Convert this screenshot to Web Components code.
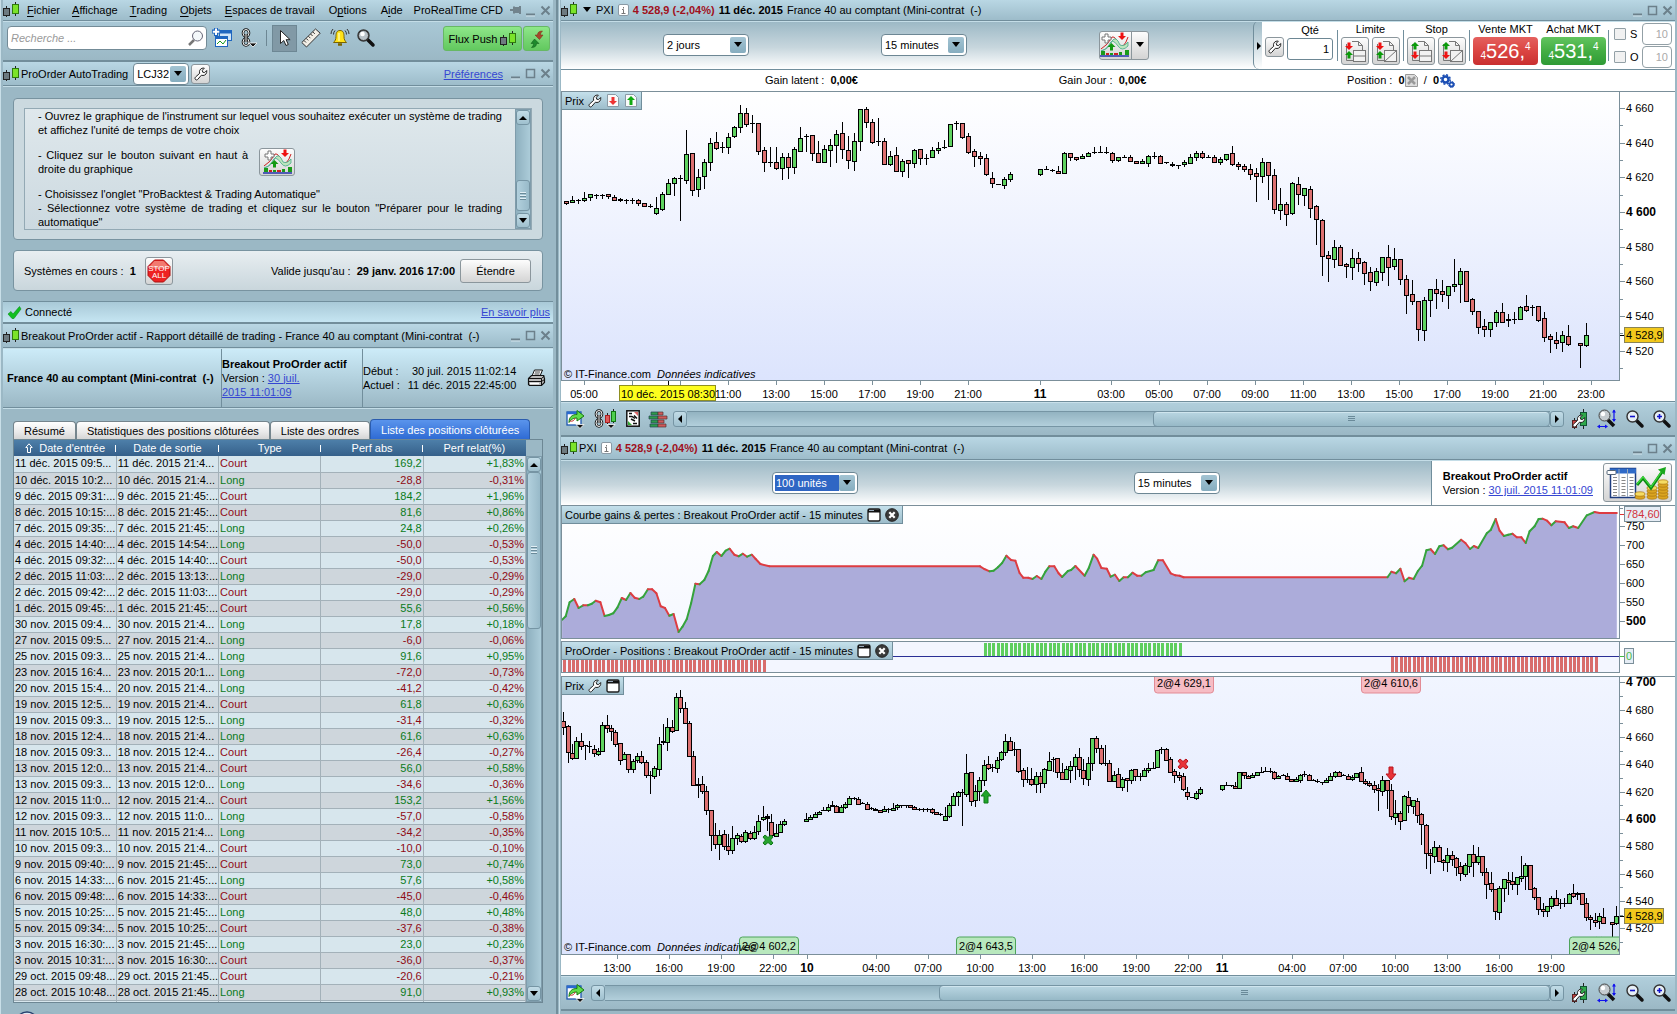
<!DOCTYPE html>
<html lang="fr">
<head>
<meta charset="utf-8">
<title>ProRealTime CFD</title>
<style>
  html, body { margin: 0; height: 100%; }
  body { font: 11px/14px "Liberation Sans", Arial, sans-serif; color: #000; background: #9bb8c5; overflow: hidden; }
</style>
</head>
<body>
<rt-desktop>
  <div slot="left">
    <rt-menu-bar></rt-menu-bar>
    <rt-tools></rt-tools>
    <rt-autotrading></rt-autotrading>
  </div>
  <rt-report slot="left"></rt-report>
  <rt-price-window slot="right"></rt-price-window>
  <rt-backtest-window slot="right"></rt-backtest-window>
</rt-desktop>

<script>
const BASE = `
  *, *::before, *::after { box-sizing: border-box; }
  :host { display: block; box-sizing: border-box; }
  button { font: inherit; color: inherit; margin: 0; padding: 0; border: 0; background: none; display: inline-flex; align-items: center; justify-content: center; }
  input { font: inherit; color: inherit; margin: 0; }
  a { color: #3546d2; }
  .raised { border: 1px solid #8b969c; border-radius: 3px; background: linear-gradient(#fdfdfd, #e8e8e8 50%, #d4d4d4); }
  rt-icon { flex: none; }
`;
function define(name, css, html, after) {
  customElements.define(name, class extends HTMLElement {
    connectedCallback() {
      if (this.shadowRoot) return;
      const root = this.attachShadow({ mode: 'open' });
      root.innerHTML = '<style>' + BASE + css + '</style>' + (typeof html === 'function' ? html(this) : html);
      if (after) after(root, this);
    }
  });
}

/* ---------- icons: [width, height, markup] ---------- */
const LENS = (x, mark) => `<path d="M${x + 10} 10l6 6" stroke="#111" stroke-width="3.500" stroke-linecap="round"/><circle cx="${x + 6.500}" cy="6.500" r="5.500" fill="#e6eef4" stroke="#333" stroke-width="1.400"/>${mark}`;
const WRENCH = (fill) => `<path d="M1.500 12.500c-.8-.9-.6-1.800.2-2.600l4-3.600c-.7-2.200.3-4.300 2.300-5 .9-.3 1.700-.3 2.300-.1L8.300 3.300l.4 1.900 1.900.4 2.100-2.100c.5 2.600-1.100 4.900-3.700 5-.6 0-1.100-.1-1.600-.3l-3.500 4c-.8.900-1.700 1-2.400.3z" fill="${fill}" stroke="#222" stroke-width="1"/>`;
const UP = (x, y, c) => `<path d="M${x} ${y}l4 4h-2.500v3.500h-3V${y + 4}h-2.500z" fill="${c}"/>`;
const DOWN = (x, y, c) => `<path d="M${x} ${y}l4-4h-2.500v-3.500h-3v3.500h-2.500z" fill="${c}"/>`;
const DOC = `<path d="M4.500 6V22.500h8M10 3.500h6.500l4 4v6M16.500 3.500v4h4" fill="none" stroke="#777"/>`;
const ORDER = (arrows, line) => `${DOC}<rect x="11.500" y="12.500" width="12" height="11" fill="#f2f2f2" stroke="#777"/>${line ? '<path d="M11.500 23.500l12-11" stroke="#777" fill="none"/>' : '<path d="M11.500 18h12" stroke="#777" fill="none"/>'}${arrows}`;
const TINYDOC = (m) => `<path d="M1.500.5h8l3 3v9h-11z" fill="#fafafa" stroke="#8a9aa5"/>${m}`;
const BACKTEST = `<path d="M1 17Q8 13 12 5Q16 4 19 14Q24 17 28 5" fill="none" stroke="#c22" stroke-width="1"/><path d="M1 19Q9 17 12 9Q16 3 20 13Q24 15 28 10V14Q22 20 18 14Q12 5 9 13Q6 18 1 19" fill="#bde6bd" stroke="#4a8" stroke-width=".8"/><path d="M5 2h3v3h3v3h-3v3h-3v-3h-3v-3h3z" fill="#fff" stroke="#777"/>${UP(11.500, 11, '#129a12')}${DOWN(22, 8, '#e11')}<path d="M1 19h4v4h-4zM10 21h3v2h-3zM19 20h3v3h-3zM25 18h4v5h-4z" fill="#1a9a1a"/><path d="M6 21h3v2h-3zM14 21h4v2h-4z" fill="#c22"/><path d="M0 24h29" stroke="#2233aa" stroke-width="1.500"/>`;
const CHAIN = `<ellipse cx="5" cy="5" rx="3" ry="3.500" fill="none" stroke="#111" stroke-width="2.600"/><ellipse cx="5" cy="14" rx="3" ry="3.500" fill="none" stroke="#111" stroke-width="2.600"/><ellipse cx="5" cy="5" rx="3" ry="3.500" fill="none" stroke="#fff" stroke-width="1"/><ellipse cx="5" cy="14" rx="3" ry="3.500" fill="none" stroke="#fff" stroke-width="1"/><path d="M5 6v8" stroke="#111" stroke-width="3"/><path d="M5 6v8" stroke="#fff"/>`;
const COIN = (x, y, n) => { let s = ''; for (let i = 0; i < n; i++) s += `<ellipse cx="${x}" cy="${y - i * 3}" rx="5" ry="2.200" fill="${i === n - 1 ? '#f6dc62' : '#dba520'}" stroke="#a87410" stroke-width=".7"/>`; return s; };
const ICONS = {
  logo: [16, 18, '<path d="M3.500 5v11M12.500 1v14" stroke="#222"/><rect x=".5" y="7.500" width="6" height="7" fill="#6d7a80" stroke="#222"/><rect x="9.500" y="3.500" width="6" height="9" fill="#7be32a" stroke="#2f7a10"/>'],
  search: [16, 16, '<path d="M6 10l-5 5" stroke="#777" stroke-width="2.500"/><circle cx="9.500" cy="6" r="5" fill="#f4f8fa" stroke="#667"/>'],
  windows: [20, 20, '<rect x="7.500" y="2.500" width="12" height="10" fill="#cfe4f8" stroke="#1e66c0"/><path d="M7 4h13" stroke="#1e66c0" stroke-width="3"/><rect x="3.500" y="8.500" width="12" height="10" fill="#fff" stroke="#1e66c0"/><path d="M3 9.500h13" stroke="#1e66c0" stroke-width="3"/><path d="M5 16l3-3 3 3 3-4" fill="none" stroke="#1a9a1a"/><path d="M4 0v8M0 3.500h8" stroke="#1e66c0" stroke-width="4"/><path d="M4 .5v6.500M.8 3.700h6.500" stroke="#fff" stroke-width="2"/>'],
  chain: [16, 20, CHAIN + '<path d="M8 15h8l-4 4z" fill="#111" stroke="#fff" stroke-width=".8"/>'],
  cursor: [12, 18, '<path d="M1.500 1.500v13l3.300-3 2.200 5 2.300-1-2.200-4.800h4z" fill="#fff" stroke="#222"/>'],
  ruler: [20, 20, '<path d="M.8 14.500L14.500 1l4.700 4.200L5.500 19z" fill="#f3efe6" stroke="#333"/><path d="M3 12.500l2 2M5.200 10.400l2 2M7.400 8.200l2 2M9.600 6l2 2M11.800 3.900l2 2" stroke="#333"/>'],
  bell: [20, 20, '<path d="M10 2.500c3.500 0 4 3 4 6s1 4.500 2.500 6h-13c1.500-1.500 2.500-3 2.500-6s.5-6 4-6z" fill="#ffe21a" stroke="#7a6300"/><path d="M9 5v8" stroke="#fff8a0" stroke-width="1.500"/><path d="M8 16.500h4" stroke="#7a6300" stroke-width="2.500"/><path d="M1 6Q1 3 3 1M3.500 6.500Q3.500 4 5 2.500M19 6Q19 3 17 1M16.500 6.500Q16.500 4 15 2.500" fill="none" stroke="#333"/>'],
  magnifier: [18, 18, LENS(0, '<circle cx="6.500" cy="6.500" r="5" fill="#b9c2c8" stroke="#333"/><circle cx="5.500" cy="5" r="2.300" fill="#fff"/>')],
  wrench: [14, 14, WRENCH('#fff')],
  swap: [14, 18, '<path d="M12.500 1C9 1 7.500 2.500 7.500 5H5l4.500 4.500L13 5h-2.500c0-1.500.5-2.500 2-4z" fill="#a5482c" stroke="#7a2a12" stroke-width=".5"/><path d="M1.500 17.500C5 17.500 6.500 16 6.500 13.500H9L4.500 9 1 13.500h2.500c0 1.500-.5 2.500-2 4z" fill="#1d8a2c" stroke="#0c5517" stroke-width=".5"/>'],
  pin: [12, 10, '<path d="M0 5h4M4 1.500v7M5 3h4v4h-4zM10 1v8" stroke="#71838d" stroke-width="2" fill="#71838d"/>'],
  min: [11, 11, '<path d="M1 9.500h9" stroke="#6c808b" stroke-width="2"/><path d="M1 11h9" stroke="#d2e4ec" stroke-width="1"/>'],
  max: [11, 11, '<rect x="1.500" y="1.500" width="8" height="8" fill="none" stroke="#6c808b" stroke-width="1.500"/>'],
  close: [11, 11, '<path d="M1.500 1.500l8 8M9.500 1.500l-8 8" stroke="#6c808b" stroke-width="2"/>'],
  info: [11, 13, '<rect x=".5" y=".5" width="10" height="11" rx="1.500" fill="#fff" stroke="#8a9aa5"/><path d="M5.500 3v1.500M4 5.500h1.500v4M3.500 9.500h4" stroke="#777" fill="none"/>'],
  backtest: [29, 26, BACKTEST],
  check: [13, 13, '<path d="M0 8l3-2.500 2 2.500 6.500-7.500L13 3 6 12.500H4z" fill="#10c020" stroke="#0a8a18" stroke-width=".6"/>'],
  stopall: [24, 24, '<path d="M7.500 1h9L23 7.500v9L16.500 23h-9L1 16.500v-9z" fill="#e22" stroke="#a11"/><path d="M7.500 2h9L22 8q-10 4-20 0z" fill="#f27a70"/><text x="12" y="11.500" text-anchor="middle" font-size="8" fill="#fff">STOP</text><text x="12" y="19" text-anchor="middle" font-size="8" fill="#fff">ALL</text>'],
  printer: [18, 18, '<path d="M5 7L7.500 1h8L13 7z" fill="#fff" stroke="#111"/><path d="M8 3h5M7.500 5h5" stroke="#111" stroke-width=".8"/><path d="M1.500 9.500l3-3h12l1 3v4l-3 3h-12l-1-1z" fill="#bbb" stroke="#111" stroke-width="1.200"/><path d="M1.500 9.500h13v7M14.500 9.500l3-2.500M1.500 12.500h13l3-2" stroke="#111" fill="none"/><path d="M3 14.500h9" stroke="#fff" stroke-width="1.500"/>'],
  uparrow: [8, 10, '<path d="M4 .8l3.200 3.700H5.500v5h-3v-5H.8z" fill="none" stroke="#fff"/>'],
  buylimit: [26, 26, ORDER(DOWN(7, 12, '#e11') + UP(7, 13, '#0a9a0a'))],
  selllimit: [26, 26, ORDER(DOWN(7, 12, '#e11') + UP(7, 13, '#0a9a0a'), 1)],
  buystop: [26, 26, ORDER(UP(7, 4, '#0a9a0a') + DOWN(7, 21, '#e11'))],
  sellstop: [26, 26, ORDER(UP(7, 4, '#0a9a0a') + DOWN(7, 21, '#e11'), 1)],
  docx: [13, 13, '<path d="M.5.5h9l3 3v9h-12z" fill="#ddd" stroke="#999"/><path d="M3 3l7 7M10 3l-7 7" stroke="#999" stroke-width="2.500"/>'],
  gears: [16, 14, '<circle cx="6.500" cy="5.500" r="3" fill="none" stroke="#1c4fb4" stroke-width="2.500"/><circle cx="6.500" cy="5.500" r="4.700" fill="none" stroke="#1c4fb4" stroke-width="1.500" stroke-dasharray="2 1.700"/><circle cx="12.500" cy="10.500" r="2" fill="none" stroke="#1c4fb4" stroke-width="1.800"/><circle cx="12.500" cy="10.500" r="3" fill="none" stroke="#1c4fb4" stroke-dasharray="1.200 1.200"/>'],
  docdown: [14, 13, TINYDOC('<path d="M7 11L3 7h2.500V3h3v4H11z" fill="#e33"/>')],
  docup: [14, 13, TINYDOC('<path d="M7 2l4 4H8.500v5h-3V6H3z" fill="#1a1"/>')],
  detach: [14, 14, '<rect x="1" y="1" width="12" height="12" rx="1.500" fill="#fff" stroke="#222" stroke-width="1.400"/><path d="M1 3h12" stroke="#111" stroke-width="3"/><path d="M2 2.500h5" stroke="#9ab" />'],
  closeround: [14, 14, '<circle cx="7" cy="7" r="6.300" fill="#3a3a3a" stroke="#222"/><path d="M4.300 4.300l5.400 5.400M9.700 4.300L4.300 9.700" stroke="#fff" stroke-width="2.200"/>'],
  export: [19, 19, '<rect x="1" y="3" width="14" height="13" fill="#fff" stroke="#1e56b0" stroke-width="1.300"/><path d="M1 4h14" stroke="#2a6ad0" stroke-width="2.500"/><path d="M3 13.500C3 8 6 5.500 11 5.500V1.500L18 7 11 12V9C8 9 5 10 3 13.500z" fill="#5fdc4a" stroke="#1a7a10"/><path d="M4 12Q8 13 9 9" fill="none" stroke="#c33"/><path d="M10 15.500h8l-4 4z" fill="#111" stroke="#fff" stroke-width=".8"/>'],
  chaincandles: [23, 20, CHAIN + '<path d="M13.500 4v11M19.500 0v14" stroke="#222"/><rect x="11.500" y="6.500" width="4" height="7" fill="#e05a5a" stroke="#a22"/><rect x="17.500" y="2.500" width="4" height="10" fill="#4fcf4f" stroke="#171"/><path d="M13 15.500h8l-4 4z" fill="#111" stroke="#fff" stroke-width=".8"/>'],
  orders: [14, 17, '<rect x=".8" y=".8" width="12.400" height="15.400" fill="#fff" stroke="#111" stroke-width="1.500"/><path d="M8 2h4v4z" fill="#d66"/><path d="M2 15v-4l4 4z" fill="#3a3"/><path d="M3 3.500h3M3 6.500h3l3 2M5 9l4 2M7 13.500h4M8 5.500l3 3" stroke="#111" stroke-width="1.500" fill="none"/>'],
  book: [18, 18, '<path d="M9 2H2v3h7zM9 6H0v3h9zM9 10H2v3h7zM9 14H1v3h8z" fill="#2f9a4c" stroke="#245" stroke-width=".7"/><path d="M9 2h5v3H9zM9 6h9v3H9zM9 10h6v3H9zM9 14h8v3H9z" fill="#cf5a5a" stroke="#533" stroke-width=".7"/>'],
  wrenchcandles: [16, 20, '<path d="M11.500 0v20M2.500 9v11" stroke="#222"/><rect x="8.500" y="3.500" width="6" height="13" fill="#2fa84a" stroke="#153"/><rect x="0.500" y="11.500" width="4" height="7" fill="#c44" stroke="#522"/><g transform="translate(0 5)">' + WRENCH('#fff') + '</g>'],
  zoomfit: [20, 20, '<path d="M10 10l7 7" stroke="#111" stroke-width="3.500"/><circle cx="7.500" cy="6.500" r="5.500" fill="#c4cbcf" stroke="#444"/><circle cx="6" cy="5" r="2.200" fill="#fff"/><path d="M17 1v11M1 17.500h9" stroke="#11e" stroke-width="1.200"/><path d="M15 3.500L17 .5l2 3zM15 10l2 3 2-3zM3 15.500l-3 2 3 2zM8 15.500l3 2-3 2z" fill="#11e"/>'],
  zoomout: [18, 18, LENS(0, '<path d="M4 6.500h5" stroke="#11c" stroke-width="1.600"/>')],
  zoomin: [18, 18, LENS(0, '<path d="M4 6.500h5M6.500 4v5" stroke="#11c" stroke-width="1.600"/>')],
  report: [64, 36, '<rect x="4.500" y="3.500" width="25" height="29" fill="#fff" stroke="#1c3c80" stroke-width="1.500"/><path d="M4 6h26" stroke="#2e6ac8" stroke-width="5"/><path d="M13 4v28M21.500 4v28" stroke="#9ab" stroke-width="1"/><path d="M9 12v19M17.500 12v19M25.500 12v19" stroke="#888" stroke-width="4" stroke-dasharray="1 2"/><rect x="1" y="5.500" width="9" height="4" rx="1" fill="#fff" stroke="#567"/>' + COIN(34, 32, 2) + COIN(46, 32, 4) + COIN(57, 32, 6) + '<path d="M31 20l6-7 8 10L56 7" fill="none" stroke="#0c8a14" stroke-width="3"/><path d="M31 19l6-7 8 10L56 6" fill="none" stroke="#3ddc3a" stroke-width="1.200"/><path d="M52 4.500L60 2l-1.500 8z" fill="#18a81c"/>'],
  tri: [10, 6, '<path d="M1 0h8L5 5z" fill="#000"/>'],
  left: [6, 10, '<path d="M5 1v8L1 5z" fill="#000"/>'],
  right: [6, 10, '<path d="M1 1v8l4-4z" fill="#000"/>'],
  triup: [10, 6, '<path d="M1 5h8L5 1z" fill="#000"/>']
};
define('rt-icon', `:host { display: inline-flex; } svg { display: block; overflow: visible; }`,
  el => { const [w, h, m] = ICONS[el.getAttribute('name')]; return `<svg width="${w}" height="${h}" viewBox="0 0 ${w} ${h}" fill="none" aria-hidden="true">${m}</svg>`; });

define('rt-select', `
  .box { display: flex; align-items: center; height: 22px; width: 100%; padding: 2px; border: 1px solid #6d8794; border-radius: 4px; background: #fff; }
  select { flex: 1; min-width: 0; height: 16px; appearance: none; border: 0; outline: 0; background: transparent; font: inherit; color: #000; padding: 0 0 0 1px; margin: 0; border-radius: 0; }
  :host([active]) select { background: #2f66c4; color: #fff; }
  .arrow { display: flex; align-items: center; justify-content: center; flex: none; width: 16px; height: 16px; background: linear-gradient(#a3c4d3, #86adbf); border-radius: 2px; }
`, el => `<div class="box"><select aria-label="${el.getAttribute('label')}"><option>${el.getAttribute('value')}</option></select><span class="arrow"><rt-icon name="tri"></rt-icon></span></div>`);

define('rt-controls', `:host { display: flex; gap: 4px; flex: none; } button { width: 11px; height: 11px; }`,
  el => (el.hasAttribute('pin') ? '<button aria-label="Épingler"><rt-icon name="pin"></rt-icon></button>' : '') +
    '<button aria-label="Réduire"><rt-icon name="min"></rt-icon></button>' +
    (el.hasAttribute('pin') ? '' : '<button aria-label="Agrandir"><rt-icon name="max"></rt-icon></button>') +
    '<button aria-label="Fermer"><rt-icon name="close"></rt-icon></button>');

define('rt-titlebar', `
  :host { display: flex; align-items: center; height: 23px; padding-right: 2px; white-space: pre; background: linear-gradient(#b9d7e4, #9dbcca); border-bottom: 1px solid #718e9c; box-shadow: 0 1px #c4dde7; position: relative; }
  .main { display: flex; align-items: center; gap: 2px; flex: 1; min-width: 0; }
`, el => `<div class="main"><rt-icon name="logo"></rt-icon><slot></slot></div><slot name="end"></slot><rt-controls ${el.hasAttribute('pin') ? 'pin' : ''}></rt-controls>`);

define('rt-desktop', `
  :host { display: flex; height: 100vh; }
  .left { flex: none; width: 558px; padding: 0 3px; display: flex; flex-direction: column; border-right: 2px solid #728e9b; border-left: 1px solid #c9dfe8; padding-left: 2px; }
  .right { flex: 1; min-width: 0; margin-left: 1px; padding: 0 2px 0 1px; border-left: 1px solid #c9dfe8; }
`, `<div class="left"><slot name="left"></slot></div><div class="right"><slot name="right"></slot></div>`);

define('rt-menu-bar', `
  rt-titlebar { height: 21px; }
  nav { display: flex; gap: 12px; padding-left: 6px; flex: 1; }
  nav button:nth-child(n+4) { margin-left: 1px; }
  nav button:nth-child(n+6) { margin-left: 2px; }
  span { margin-right: 7px; }
  u { text-underline-offset: 2px; }
`, `<rt-titlebar pin><nav>
  <button><u>F</u>ichier</button><button><u>A</u>ffichage</button><button><u>T</u>rading</button><button><u>O</u>bjets</button><button><u>E</u>spaces de travail</button><button>O<u>p</u>tions</button><button>A<u>i</u>de</button>
</nav><span slot="end">ProRealTime CFD</span></rt-titlebar>`);

define('rt-tools', `
  :host { display: flex; align-items: flex-start; height: 41px; padding: 4px 3px 0 4px; border-bottom: 2px solid #728e9b; background: linear-gradient(#a9c8d6, #9bb8c5); }
  .search { display: flex; align-items: center; width: 200px; height: 24px; margin-top: 1px; padding: 0 2px; border: 1px solid #738b97; border-radius: 4px; background: #fff; }
  .search input { flex: 1; min-width: 0; border: 0; outline: 0; padding: 0 1px; font-style: italic; background: none; }
  .search input::placeholder { color: #9a9a9a; opacity: 1; }
  .set { display: flex; align-items: center; height: 26px; margin-left: 5px; gap: 9px; flex: 1; }
  .set button:nth-last-child(1) { margin-left: -2px; }
  .set i { width: 1px; height: 16px; background: #6d8794; }
  .set .on { width: 25px; height: 27px; background: #8199a6; border: 1px solid #6d8794; margin-left: -4px; margin-right: -5px; }
  .push { height: 25px; margin-top: 1px; border: 1px solid #67b864; border-radius: 3px; background: linear-gradient(#8ee889, #78d674 50%, #62c95f); }
  .flux { width: 79px; gap: 3px; margin-right: 1px; } .swap { width: 27px; }
`, `<label class="search"><input aria-label="Recherche" placeholder="Recherche ..."><rt-icon name="search"></rt-icon></label>
<div class="set"><button aria-label="Fenêtres"><rt-icon name="windows"></rt-icon></button><button aria-label="Lier"><rt-icon name="chain"></rt-icon></button><i></i><button class="on" aria-label="Curseur"><rt-icon name="cursor"></rt-icon></button><button aria-label="Règle"><rt-icon name="ruler"></rt-icon></button><button aria-label="Alertes"><rt-icon name="bell"></rt-icon></button><button aria-label="Loupe"><rt-icon name="magnifier"></rt-icon></button></div>
<button class="push flux">Flux Push<rt-icon name="logo"></rt-icon></button><button class="push swap" aria-label="Échanger"><rt-icon name="swap"></rt-icon></button>`);

define('rt-vscroll', `
  :host { display: flex; flex-direction: column; width: 16px; border: 1px solid #7f9cab; background: linear-gradient(90deg, #8eb0bf, #acccd9); }
  button, .thumb { background: linear-gradient(#c2dce7, #9fc0ce); border: 1px solid #7695a4; border-radius: 3px; }
  button { height: 15px; flex: none; }
  .thumb { background: linear-gradient(90deg, #b2d0dd, #98bac9); display: flex; flex-direction: column; align-items: center; justify-content: center; gap: 1px; }
  .thumb i { width: 6px; height: 1px; background: #e2eff5; border-bottom: 0; box-shadow: 0 1px #6a8a99; margin-bottom: 1px; }
`, el => { const [a, b, c] = el.getAttribute('parts').split(' '); return `<button aria-label="Haut"><rt-icon name="triup"></rt-icon></button><div style="flex:${a}"></div><div class="thumb" style="flex:${b}"><i></i><i></i><i></i></div><div style="flex:${c}"></div><button aria-label="Bas"><rt-icon name="tri"></rt-icon></button>`; });

define('rt-autotrading', `
  rt-titlebar { height: 24px; }
  .acct { width: 56px; margin-left: 3px; } .wr { width: 19px; height: 20px; }
  a[slot] { margin-right: 7px; }
  .body { padding: 12px 10px 10px; background: #9bb8c5; }
  .card { border: 1px solid #7893a0; border-radius: 4px; background: #cbd9df; }
  .help { padding: 9px 10px; height: 142px; }
  .view { display: flex; height: 122px; border: 1px solid #93a9b4; background: linear-gradient(#dfe8ec, #ccd9e0); }
  .text { flex: 1; padding: 0 13px; text-align: justify; }
  p { margin: 0; } .row { display: flex; align-items: center; gap: 11px; margin: 11px 0; } .row p { width: 210px; }
  .row .raised { width: 36px; height: 28px; }
  .sys { display: flex; align-items: center; height: 41px; margin-top: 10px; padding: 0 11px 0 10px; background: linear-gradient(#e8eef1, #c9d6dc); }
  .stop { width: 28px; height: 28px; margin-left: 9px; }
  .sys span:nth-of-type(2) { margin-left: auto; margin-right: 5px; }
  .ext { width: 71px; height: 24px; }
  .status { display: flex; align-items: center; gap: 4px; height: 21px; padding: 0 3px 0 5px; border-top: 1px solid #718e9c; background: linear-gradient(#a9c9d7, #c5e5f2); }
  .status a { margin-left: auto; }
  .end { height: 2px; background: #728e9b; }
`, `<rt-titlebar>ProOrder AutoTrading<rt-select class="acct" label="Compte" value="LCJ32"></rt-select><button class="raised wr" aria-label="Réglages"><rt-icon name="wrench"></rt-icon></button><a slot="end" href="#">Préférences</a></rt-titlebar>
<div class="body"><div class="card help"><div class="view"><div class="text">
<p>- Ouvrez le graphique de l'instrument sur lequel vous souhaitez exécuter un système de trading et affichez l'unité de temps de votre choix</p>
<div class="row"><p>- Cliquez sur le bouton suivant en haut à droite du graphique</p><button class="raised" aria-label="Backtest"><rt-icon name="backtest"></rt-icon></button></div>
<p>- Choisissez l'onglet "ProBacktest &amp; Trading Automatique"</p><p>- Sélectionnez votre système de trading et cliquez sur le bouton "Préparer pour le trading automatique"</p></div>
<rt-vscroll parts="57 30 2"></rt-vscroll></div></div>
<div class="card sys"><span>Systèmes en cours :&nbsp; <b>1</b></span><button class="raised stop" aria-label="Tout arrêter"><rt-icon name="stopall"></rt-icon></button><span>Valide jusqu'au :&nbsp; <b>29 janv. 2016 17:00</b></span><button class="raised ext">Étendre</button></div></div>
<div class="status"><rt-icon name="check"></rt-icon>Connecté<a href="#">En savoir plus</a></div><div class="end"></div>`);

/* ---------- closed positions ---------- */
const ROWS = `11 déc. 2015 09:5...|11 déc. 2015 21:4...|C|169,2|+1,83
10 déc. 2015 10:2...|10 déc. 2015 21:4...|L|-28,8|-0,31
9 déc. 2015 09:31:...|9 déc. 2015 21:45:...|C|184,2|+1,96
8 déc. 2015 10:15:...|8 déc. 2015 21:45:...|C|81,6|+0,86
7 déc. 2015 09:35:...|7 déc. 2015 21:45:...|L|24,8|+0,26
4 déc. 2015 14:40:...|4 déc. 2015 14:54:...|L|-50,0|-0,53
4 déc. 2015 09:32:...|4 déc. 2015 14:40:...|C|-50,0|-0,53
2 déc. 2015 11:03:...|2 déc. 2015 13:13:...|L|-29,0|-0,29
2 déc. 2015 09:42:...|2 déc. 2015 11:03:...|C|-29,0|-0,29
1 déc. 2015 09:45:...|1 déc. 2015 21:45:...|C|55,6|+0,56
30 nov. 2015 09:4...|30 nov. 2015 21:4...|L|17,8|+0,18
27 nov. 2015 09:5...|27 nov. 2015 21:4...|L|-6,0|-0,06
25 nov. 2015 09:3...|25 nov. 2015 21:4...|L|91,6|+0,95
23 nov. 2015 16:4...|23 nov. 2015 20:1...|L|-72,0|-0,73
20 nov. 2015 15:4...|20 nov. 2015 21:4...|L|-41,2|-0,42
19 nov. 2015 12:5...|19 nov. 2015 21:4...|C|61,8|+0,63
19 nov. 2015 09:3...|19 nov. 2015 12:5...|L|-31,4|-0,32
18 nov. 2015 12:4...|18 nov. 2015 21:4...|L|61,6|+0,63
18 nov. 2015 09:3...|18 nov. 2015 12:4...|C|-26,4|-0,27
13 nov. 2015 12:0...|13 nov. 2015 21:4...|C|56,0|+0,58
13 nov. 2015 09:3...|13 nov. 2015 12:0...|L|-34,6|-0,36
12 nov. 2015 11:0...|12 nov. 2015 21:4...|C|153,2|+1,56
12 nov. 2015 09:3...|12 nov. 2015 11:0...|L|-57,0|-0,58
11 nov. 2015 10:5...|11 nov. 2015 21:4...|L|-34,2|-0,35
10 nov. 2015 09:3...|10 nov. 2015 21:4...|C|-10,0|-0,10
9 nov. 2015 09:40:...|9 nov. 2015 21:45:...|C|73,0|+0,74
6 nov. 2015 14:33:...|6 nov. 2015 21:45:...|L|57,6|+0,58
6 nov. 2015 09:48:...|6 nov. 2015 14:33:...|C|-45,0|-0,46
5 nov. 2015 10:25:...|5 nov. 2015 21:45:...|L|48,0|+0,48
5 nov. 2015 09:34:...|5 nov. 2015 10:25:...|C|-37,6|-0,38
3 nov. 2015 16:30:...|3 nov. 2015 21:45:...|L|23,0|+0,23
3 nov. 2015 10:31:...|3 nov. 2015 16:30:...|C|-36,0|-0,37
29 oct. 2015 09:48...|29 oct. 2015 21:45...|C|-20,6|-0,21
28 oct. 2015 10:48...|28 oct. 2015 21:45...|L|91,0|+0,93`.split('\n').map(r => r.split('|'));

define('rt-positions', `
  :host { display: flex; min-height: 0; border: 1px solid #6d8794; overflow: hidden; }
  .wrap { flex: 1; min-width: 0; overflow: hidden; }
  table { width: 100%; table-layout: fixed; border-collapse: collapse; white-space: nowrap; }
  th { height: 16px; padding: 0; font-weight: normal; color: #fff; background: linear-gradient(#4d7fa9, #35608a); position: relative; }
  th:not(:last-child)::after { content: ""; position: absolute; right: 0; top: 5px; width: 1px; height: 7px; background: #fff; }
  th span { display: inline-flex; align-items: center; gap: 6px; }
  td { height: 16px; line-height: 15px; padding: 0 1px; border: solid #a3b1b9; border-width: 0 1px 1px 0; overflow: hidden; }
  tbody tr { background: #d7e6ed; } tbody tr:nth-child(even) { background: #ced6dc; }
  .n { text-align: right; } .g { color: #0a7a1a; } .r { color: #8e0a14; }
  .side { flex: none; width: 16px; padding-top: 16px; display: flex; }
  rt-vscroll { flex: 1; }
`, () => `<div class="wrap"><table><thead><tr><th><span><rt-icon name="uparrow"></rt-icon>Date d'entrée</span></th><th>Date de sortie</th><th>Type</th><th>Perf abs</th><th>Perf relat(%)</th></tr></thead><tbody>${
  ROWS.map(([a, b, t, p, q]) => { const c = p[0] === '-' ? 'r' : 'g'; return `<tr><td>${a}</td><td>${b}</td><td class="${t === 'C' ? 'r">Court' : 'g">Long'}</td><td class="n ${c}">${p}</td><td class="n ${c}">${q}%</td></tr>`; }).join('')
}<tr><td></td><td></td><td></td><td></td><td></td></tr></tbody></table></div><div class="side"><rt-vscroll parts="0 156 360"></rt-vscroll></div>`);

define('rt-report', `
  :host { display: flex; flex-direction: column; flex: 1; min-height: 0; }
  rt-titlebar { height: 24px; flex: none; }
  .head { display: flex; flex: none; height: 60px; background: linear-gradient(#cdecf9, #9bb8c5); border-bottom: 1px solid #718e9c; box-shadow: 0 1px #c4dde7; white-space: pre; }
  .head > div { display: flex; align-items: center; }
  .a { width: 218px; padding-left: 4px; font-weight: bold; } .b { width: 141px; border-left: 1px solid #718e9c; }
  .c { flex: 1; border-left: 1px solid #718e9c; gap: 8px; } .c .n { text-align: right; } .c button { margin: 0 8px 0 auto; }
  .tabs { display: flex; align-items: flex-end; flex: none; height: 20px; margin: 11px 10px 0; }
  .tabs button { height: 18px; padding: 0 10px; white-space: nowrap; border: 1px solid #75858d; border-bottom: 0; border-radius: 4px 4px 0 0; background: linear-gradient(#fff, #e9e9e9 60%, #d5d5d5); }
  .tabs .on { height: 20px; color: #fff; border-color: #2b5cae; background: linear-gradient(#5a94ec, #2f6bd4); }
  rt-positions { flex: 1; margin: 0 10px; }
  .foot { flex: none; height: 11px; overflow: hidden; padding: 8px 0 0 12px; }
  .foot svg { display: block; }
`, `<rt-titlebar>Breakout ProOrder actif - Rapport détaillé de trading - France 40 au comptant (Mini-contrat&nbsp; (-)</rt-titlebar>
<div class="head"><div class="a">France 40 au comptant (Mini-contrat&nbsp; (-)</div><div class="b"><span><b>Breakout ProOrder actif</b><br>Version : <a href="#">30 juil.<br>2015 11:01:09</a></span></div><div class="c"><span>Début :<br>Actuel :</span><span class="n">30 juil. 2015 11:02:14<br>11 déc. 2015 22:45:00</span><button aria-label="Imprimer"><rt-icon name="printer"></rt-icon></button></div></div>
<div class="tabs"><button>Résumé</button><button>Statistiques des positions clôturées</button><button>Liste des ordres</button><button class="on">Liste des positions clôturées</button></div>
<rt-positions></rt-positions>
<div class="foot"><svg width="24" height="24"><circle cx="12" cy="12" r="11" fill="#dfeaf2" stroke="#27406e" stroke-width="1.500"/></svg></div>`);

/* ---------- quarter-hour bars ----------
   kind (g up, r down, d flat), body top, body bottom, high, low.
   Levels count downwards: 325 is 4660 and 5.2 steps make one point. */
const BARS = `r603,610,603,614 g601,607,588,608 d600,602,597,613 g595,601,576,605 g583,592,582,602 d584,587,583,597 d584,587,583,597 r583,589,583,597 r592,599,586,602 d598,602,595,606 d600,602,597,611 d600,602,595,611 r601,610,596,617 r610,619,609,622 d618,622,613,624 g625,640,591,644 g583,626,575,632 g550,583,538,585 g535,548,531,587 d535,538,525,662 g463,541,390,553 r460,569,460,587 g530,566,507,590 g487,529,477,567 g430,487,414,512 r427,445,397,450 d441,443,427,459 g412,442,400,461 g381,409,378,415 g340,382,315,398 r340,373,324,380 d370,373,346,398 r370,454,370,464 r451,485,442,515 d486,489,441,502 r486,503,442,510 g472,505,458,539 r472,502,460,537 g448,502,442,521 g415,452,381,453 d408,411,403,457 r406,459,406,483 r460,485,424,490 g448,485,436,486 g436,451,418,501 g403,436,390,489 r400,448,367,476 r451,481,409,507 g424,484,400,513 g328,424,328,453 r328,367,322,385 r367,425,356,431 d423,425,354,437 r424,491,413,493 g469,493,453,498 r466,514,442,516 g484,514,476,531 r481,490,480,533 g451,490,446,503 r448,474,448,494 d474,476,461,494 g451,472,442,474 g445,451,426,463 d442,445,421,448 g373,439,373,440 d370,373,363,391 r370,412,368,418 r409,457,400,461 r454,469,446,502 r469,475,457,494 r475,523,463,529 r535,550,515,564 d552,554,552,554 g538,556,532,566 g523,538,516,545 - - - - g508,523,507,529 d507,509,498,509 d509,512,507,517 r512,518,498,523 g460,520,457,523 r460,470,458,484 r472,478,470,482 g469,475,463,478 g460,469,457,471 d457,460,440,463 d455,458,438,458 d455,457,442,462 r460,481,455,488 g472,481,471,486 d471,473,466,473 r472,484,464,485 r484,490,484,492 g484,490,476,492 g469,488,466,501 d467,469,455,476 r469,488,466,491 d487,490,486,491 d491,497,486,500 d495,497,495,507 g487,493,481,500 g472,488,463,491 g460,472,453,482 r460,472,454,476 d471,473,465,475 r472,485,466,488 g478,485,471,494 g463,478,462,482 r460,493,438,497 r493,499,486,509 r499,508,491,515 r508,523,492,539 r520,527,504,606 g487,529,475,548 r487,526,487,599 r526,626,506,641 g613,629,565,660 r613,643,605,678 g550,640,546,644 r553,583,531,614 g565,586,565,618 r568,623,558,654 r619,658,615,735 r660,767,657,828 r766,773,753,846 g742,776,719,803 r742,796,736,797 r793,799,790,834 g775,802,746,840 r775,790,757,815 r787,818,783,855 r817,842,802,873 g814,845,804,857 g772,815,771,843 r772,802,735,857 g778,799,743,811 r778,838,777,854 r838,884,825,941 r881,902,840,914 r904,986,904,1022 g901,989,892,1022 g866,901,866,951 r868,878,837,927 r874,883,840,906 g859,884,857,927 g853,859,777,876 g814,853,804,909 r814,902,814,905 r898,934,894,944 r934,980,934,1001 r979,986,957,1010 g967,986,967,1010 g937,967,930,981 r937,965,909,965 d958,962,942,980 d957,960,937,971 g922,958,919,960 r919,929,885,937 d920,925,915,947 r919,959,918,965 r955,1010,937,1026 r1009,1018,1003,1059 r1021,1028,996,1047 g1006,1025,993,1056 r1009,1031,975,1038 - r1030,1036,1030,1104 g1006,1034,969,1041`;
/* Bars of the day before; here 169 is 4660 and 4.11 steps make one point. */
const EARLIER = `r122,140,93,164 r136,214,132,248 r217,233,190,239 g181,233,169,236 r181,196,156,207 d194,196,192,239 d196,198,181,217 r206,218,193,229 g212,220,203,226 g133,212,123,212 r133,142,102,158 r142,150,133,180 r154,190,148,198 r187,238,187,253 g220,236,215,238 r221,265,220,277 g241,265,235,277 g227,238,217,247 r227,244,210,249 r244,284,238,292 d283,285,270,341 g262,286,256,296 g190,265,168,288 d182,187,129,194 g140,184,111,212 r140,151,117,158 g49,149,37,151 r49,82,28,97 r82,128,63,128 r128,226,121,230 r226,313,210,317 d312,316,292,353 r310,333,286,340 r331,388,318,404 r388,463,388,513 r463,490,427,506 g463,490,448,539 r460,497,450,510 r497,508,461,524 g472,508,438,521 g463,472,458,493 r466,482,460,488 g455,482,448,488 r457,472,453,479 g455,472,436,479 g421,452,405,465 g411,417,376,421 d408,415,402,452 r424,464,402,470 g457,466,430,467 g430,456,423,458 g421,430,415,437 - - - - g415,421,399,426 g411,415,405,417 g402,410,394,413 g394,401,391,405 d390,393,381,393 g379,388,370,394 d374,380,362,381 r377,394,373,399 g379,394,375,397 g370,379,365,386 g352,370,348,373 d353,356,351,358 r357,370,350,373 d368,371,366,372 r370,385,366,389 d383,387,381,389 d387,391,384,391`;
const parse = (s, top, unit) => s.split(' ').map(t => t === '-' ? null : { k: t[0], v: t.slice(1).split(',').map(n => 4660 - (n - top) / unit) });
const TODAY = parse(BARS, 325, 5.2);
const ALL = parse(EARLIER, 169, 4.11).concat(TODAY);
const FILL = { g: '#5fd35f', r: '#dc7070' };
function candles(bars, xOf, yOf) {
  return bars.map((b, i) => {
    if (!b) return '';
    const x = Math.round(xOf(i)), [t, bo, h, l] = b.v.map(p => Math.round(yOf(p)));
    const bh = b.k === 'd' ? Math.max(1, bo - t) : Math.max(3, bo - t + 1);
    return `<path d="M${x} ${h}h1V${Math.max(l, h + 1)}h-1zM${x - 2} ${t}h5v${bh}h-5z" fill="#000"/>` +
      (b.k === 'd' ? '' : `<path d="M${x - 1} ${t + 1}h3v${bh - 2}h-3z" fill="${FILL[b.k]}"/>`);
  }).join('');
}
function yAxis(height, labels, minors, extra = '') {
  return `<svg class="axis" width="55" height="${height}">` +
    labels.map(([y, t, b]) => `<path d="M0 ${Math.round(y)}.5h5" stroke="#7b8f9a"/><text x="6" y="${Math.round(y) + 4}"${b ? ' font-weight="bold" font-size="12"' : ''}>${t}</text>`).join('') +
    minors.map(y => `<path d="M0 ${Math.round(y)}.5h3" stroke="#7b8f9a"/>`).join('') + extra + '</svg>';
}
const priceTag = y => `<path d="M0 ${y}.500h5" stroke="#000"/><rect x="4.500" y="${y - 7.500}" width="39" height="15" fill="#f2c81c" stroke="#8a8455"/><text x="6" y="${y + 4}">4 528,9</text>`;
function xAxis(marks, extra = '') {
  return `<svg class="x" height="20">` + marks.map(([x, t, b]) => `<path d="M${x}.500 0v4" stroke="#7b8f9a"/><text x="${x}" y="17" text-anchor="middle"${b ? ' font-weight="bold" font-size="12"' : ''}>${t}</text>`).join('') + extra + '</svg>';
}
const CHART_CSS = `
  svg { display: block; } svg text { font-family: inherit; font-size: 11px; fill: #000; } svg text[font-size="12"] { font-size: 12px; }
  .row { display: flex; background: #fff; position: relative; border-top: 1px solid #7b8f9a; }
  .plot { flex: 1; min-width: 0; position: relative; border: solid #7b8f9a; border-width: 0 1px 1px 1px; overflow: hidden; }
  .plot > svg { width: 100%; }
  .axis { flex: none; overflow: visible; }
  .x { width: 100%; background: #fff; }
  .tag { position: absolute; z-index: 1; left: 0; top: 0; height: 18px; display: flex; align-items: center; gap: 4px; padding: 0 3px; background: linear-gradient(#c4e0eb, #9dbdcb); border: solid #718e9c; border-width: 0 1px 1px 0; white-space: nowrap; }
  .bar { display: flex; background: linear-gradient(#9bb8c5, #c7d6dd 55%, #fff); }
  .symbol { display: flex; align-items: center; gap: 4px; white-space: pre; margin-left: 3px; }
  .symbol .v { color: #a0101c; font-weight: bold; }
`;
const COPY = y => `<text x="2" y="${y}">© IT-Finance.com&#160; <tspan font-style="italic">Données indicatives</tspan></text>`;
const SYMBOL = `PXI<rt-icon name="info"></rt-icon><span class="v">4 528,9 (-2,04%)</span><b>11 déc. 2015</b><span>France 40 au comptant (Mini-contrat&nbsp; (-)</span>`;

define('rt-hscroll', `
  :host { display: flex; align-items: center; height: 34px; padding: 0 4px 0 5px; border-top: 1px solid #718e9c; box-shadow: inset 0 1px #c9e0ea; background: linear-gradient(#b1cfdc, #9bb8c5); }
  .icons { display: flex; gap: 9px; align-items: center; padding-right: 6px; }
  .track { flex: 1; display: flex; height: 16px; border: solid #7695a4; border-width: 1px 0; background: linear-gradient(#93b3c1, #b2cfdb); }
  .end { width: 14px; height: 16px; border: 1px solid #7695a4; border-radius: 3px; background: linear-gradient(#c2dce7, #9fc0ce); }
  .thumb { display: flex; flex-direction: column; gap: 1px; align-items: center; justify-content: center; margin: -1px 0; border: 1px solid #7695a4; border-radius: 4px; background: linear-gradient(#b9d6e2, #97b9c7); box-shadow: inset 0 1px #cfe5ee; }
  .thumb i { width: 7px; height: 1px; background: #6a8a99; }
  .zoom { display: flex; gap: 9px; padding-left: 8px; align-items: center; }
`, el => { const [a, b] = el.getAttribute('parts').split(' '); return `<div class="icons"><slot></slot></div><button class="end" aria-label="Gauche"><rt-icon name="left"></rt-icon></button><div class="track"><div style="flex:${a}"></div><div class="thumb" style="flex:${b}"><i></i><i></i><i></i></div></div><button class="end" aria-label="Droite"><rt-icon name="right"></rt-icon></button>
<div class="zoom"><button aria-label="Réglages"><rt-icon name="wrenchcandles"></rt-icon></button><button aria-label="Ajuster"><rt-icon name="zoomfit"></rt-icon></button><button aria-label="Zoom arrière"><rt-icon name="zoomout"></rt-icon></button><button aria-label="Zoom avant"><rt-icon name="zoomin"></rt-icon></button></div>`; });

define('rt-order-panel', `
  :host { display: flex; align-items: stretch; height: 47px; background: #fff; padding: 0 3px; }
  .g { display: flex; flex-direction: column; align-items: center; padding: 0 3px; border-right: 0; position: relative; }
  .g > span { height: 15px; line-height: 14px; white-space: nowrap; }
  .g > div { display: flex; gap: 3px; }
  .sep { width: 1px; height: 31px; align-self: center; background: #718e9c; }
  .raised { width: 28px; height: 28px; }
  .qty { display: flex; gap: 3px; align-items: flex-end; padding: 0 4px 9px 0; }
  .qty label { text-align: center; display: flex; flex-direction: column; gap: 1px; }
  .qty input { width: 46px; height: 22px; text-align: right; border: 1px solid #6d8794; border-radius: 3px; padding: 0 3px; }
  .qty .raised { width: 19px; height: 20px; margin-bottom: 3px; }
  .deal { width: 65px; height: 28px; color: #fff; border-radius: 4px; align-items: stretch; }
  .deal big { font-size: 20px; line-height: 28px; } .deal small { font-size: 10px; line-height: 12px; padding-top: 4px; } .deal small:first-child { padding-top: 13px; }
  .sell { background: linear-gradient(#e4605e, #db4542 50%, #c92f30); } .buy { background: linear-gradient(#62c45f, #44ae44 50%, #2f9a35); }
  .mk { padding: 0 2px 0 3px; } .mk + .mk { padding-left: 1px; }
  .so { display: flex; flex-direction: column; justify-content: space-between; padding: 1px 0 1px 5px; }
  .so > div { display: flex; align-items: center; gap: 4px; }
  .so label { display: flex; align-items: center; gap: 4px; width: 24px; }
  .so input[type=checkbox] { appearance: none; width: 12px; height: 12px; border: 1px solid #93a0a6; background: #f1f1f1; border-radius: 1px; flex: none; }
  .so input[type=text] { width: 30px; height: 22px; border: 1px solid #93a0a6; border-radius: 4px; text-align: right; padding: 0 3px; color: #a9a9a9; background: #fff; }
`, `<div class="qty"><button class="raised" aria-label="Réglages"><rt-icon name="wrench"></rt-icon></button><label>Qté<input value="1"></label></div><i class="sep"></i>
<div class="g"><span>Limite</span><div><button class="raised" aria-label="Achat limite"><rt-icon name="buylimit"></rt-icon></button><button class="raised" aria-label="Vente limite"><rt-icon name="selllimit"></rt-icon></button></div></div><i class="sep"></i>
<div class="g"><span>Stop</span><div><button class="raised" aria-label="Achat stop"><rt-icon name="buystop"></rt-icon></button><button class="raised" aria-label="Vente stop"><rt-icon name="sellstop"></rt-icon></button></div></div><i class="sep"></i>
<div class="g mk"><span>Vente MKT</span><button class="deal sell"><small>4</small><big>526,</big><small>4</small></button></div>
<div class="g mk"><span>Achat MKT</span><button class="deal buy"><small>4</small><big>531,</big><small>4</small></button></div><i class="sep"></i>
<div class="so"><div><label><input type="checkbox">S</label><input type="text" value="10" aria-label="Stop"></div><div><label><input type="checkbox">O</label><input type="text" value="10" aria-label="Objectif"></div></div>`);

define('rt-price-window', CHART_CSS + `
  rt-titlebar { height: 21px; }
  .bar { height: 48px; box-shadow: inset 0 1px #c4dde7; }
  .picks { flex: 1; display: flex; align-items: center; justify-content: space-between; padding: 0 104px 0 102px; }
  .picks rt-select { width: 86px; }
  .bt { width: 50px; height: 29px; } .bt rt-icon:first-child { margin-right: 2px; } .bt rt-icon:last-child { border-left: 1px solid #8b969c; padding: 11px 3px; }
  .fold { width: 9px; border-left: 1px solid #718e9c; border-radius: 6px 0 0 6px; background: linear-gradient(#9bb8c5, #fff); padding: 19px 0 0 2px; }
  rt-order-panel { height: 47px; margin-top: 1px; }
  .gains { display: flex; justify-content: space-between; height: 22px; line-height: 21px; align-items: center; padding: 0 220px 0 204px; background: #fff; border-top: 1px solid #718e9c; }
  .gains span { display: flex; align-items: center; white-space: pre; }
  .g1 { background: linear-gradient(#fff, #dce4fd); }
`, `<rt-titlebar><div class="symbol"><rt-icon name="tri"></rt-icon>${SYMBOL}</div></rt-titlebar>
<div class="bar"><div class="picks"><rt-select label="Période" value="2 jours"></rt-select><rt-select label="Unité de temps" value="15 minutes"></rt-select><button class="raised bt" aria-label="Backtest"><rt-icon name="backtest"></rt-icon><rt-icon name="tri"></rt-icon></button></div><div class="fold"><rt-icon name="right"></rt-icon></div><rt-order-panel></rt-order-panel></div>
<div class="gains"><span>Gain latent :  <b>0,00€</b></span><span>Gain Jour :  <b>0,00€</b></span><span>Position :  <b>0</b><rt-icon name="docx"></rt-icon>  /  <b>0</b><rt-icon name="gears"></rt-icon></span></div>
<div class="row"><div class="plot g1"><div class="tag">Prix<rt-icon name="wrench"></rt-icon><rt-icon name="docdown"></rt-icon><rt-icon name="docup"></rt-icon></div><svg height="288" shape-rendering="crispEdges">${candles(TODAY, i => 4 + 6 * i, p => 16.300 + (4660 - p) * 1.7333)}${COPY(286)}</svg></div>${
  yAxis(288, [4660, 4640, 4620, 4600, 4580, 4560, 4540, 4520].map(p => [16 + (4660 - p) * 1.7333, '4 ' + (p - 4000), p === 4600]), [4650, 4630, 4610, 4590, 4570, 4550, 4530, 4510].map(p => 16 + (4660 - p) * 1.7333), priceTag(243))}</div>
${xAxis([[23, '05:00'], [71, ''], [119, ''], [167, '11:00'], [215, '13:00'], [263, '15:00'], [311, '17:00'], [359, '19:00'], [407, '21:00'], [479, '11', 1], [550, '03:00'], [598, '05:00'], [646, '07:00'], [694, '09:00'], [742, '11:00'], [790, '13:00'], [838, '15:00'], [886, '17:00'], [934, '19:00'], [982, '21:00'], [1030, '23:00']],
  '<path d="M107.500 0v5" stroke="#000"/><rect x="58.500" y="4.500" width="96" height="15" fill="#fdfd1e" stroke="#8f8f20"/><text x="107" y="17" text-anchor="middle">10 déc. 2015 08:30</text>')}
<rt-hscroll parts="464 394"><button aria-label="Exporter"><rt-icon name="export"></rt-icon></button><button aria-label="Lier"><rt-icon name="chaincandles"></rt-icon></button><button aria-label="Ordres"><rt-icon name="orders"></rt-icon></button><button aria-label="Carnet"><rt-icon name="book"></rt-icon></button></rt-hscroll>`);

/* ---------- profit curve: x,y pairs, 2.8 and 3 units to the pixel ---------- */
const CURVE = `20,569 30,559 41,517 54,507 66,534 79,526 92,526 103,521 114,512 127,517 139,558 151,555 163,550 175,532 187,504 199,510 211,489 223,503 236,507 247,500 260,478 272,478 284,490 296,529 308,534 320,557 332,552 346,606 357,590 369,567 381,520 393,461 405,463 418,450 430,423 442,378 453,366 466,378 478,362 489,356 502,374 514,379 526,371 538,380 551,374 562,387 575,402 600,409 1190,409 1202,417 1217,424 1228,422 1240,412 1252,399 1264,377 1277,390 1289,392 1301,429 1311,443 1325,443 1337,447 1349,438 1362,447 1373,425 1384,409 1398,409 1410,430 1420,441 1436,423 1445,420 1457,408 1483,437 1495,413 1508,374 1518,386 1530,414 1545,416 1556,440 1568,434 1580,453 1592,442 1604,442 1617,428 1630,437 1642,437 1654,427 1676,420 1689,391 1702,391 1724,430 1737,436 1749,437 1760,442 2331,442 2342,425 2355,430 2367,416 2379,454 2391,443 2404,447 2416,423 2428,407 2440,361 2452,358 2464,372 2476,349 2488,346 2500,358 2512,353 2537,329 2549,339 2562,357 2573,348 2585,354 2609,310 2620,300 2634,267 2645,302 2657,318 2669,314 2681,311 2693,322 2706,322 2718,339 2729,304 2743,289 2754,267 2765,266 2778,272 2790,286 2802,274 2827,277 2839,294 2851,289 2865,294 2889,256 2911,246 2925,249 2973,249`
  .split(' ').map(s => { const [x, y] = s.split(',').map(Number); return [Math.round(x / 2.8 * 10) / 10 - 7, Math.round((y / 3 - 76) * 10) / 10]; });
function curve() {
  let s = `<path d="M${CURVE.map(p => p.join(' ')).join('L')}V133H${CURVE[0][0]}z" fill="#acacda"/>`;
  for (let i = 1; i < CURVE.length; i++) s += `<path d="M${CURVE[i - 1].join(' ')}L${CURVE[i].join(' ')}" stroke="${CURVE[i][1] < CURVE[i - 1][1] ? '#35a33c' : '#dd3c42'}" stroke-width="2" stroke-linecap="round"/>`;
  return s;
}
const X2 = i => 1054.400 - 4.333 * (243 - i);
function positions() {
  let s = '';
  const put = (a, b, y, h, c) => { for (let i = a; i <= b; i++) s += `<rect x="${Math.round(X2(i + 73))}" y="${y}" width="3" height="${h}" fill="${c}"/>`; };
  put(-73, -27, 15, 16, '#d86c6c'); put(24, 69, 1, 14, '#5fce5f'); put(118, 165, 15, 16, '#d86c6c');
  return s + '<path d="M0 14.500H2000" stroke="#2a2f96"/>';
}
const CROSS = (x, y, c, d) => `<path d="M${x - 5} ${y - 3}l2-2 3 2.500 3-2.500 2 2-2.500 3 2.500 3-2 2-3-2.500-3 2.500-2-2 2.500-3z" fill="${c}" stroke="${d}"/>`;
const FLAG = (x, y, t, c, d, h = 17) => `<rect x="${x}.500" y="${y}" width="59" height="${h}" rx="3" fill="${c}" stroke="${d}"/><text x="${x + 3}" y="${y + 13}">${t}</text>`;
const PY = p => 5.200 + (4700 - p) * 1.3675;

define('rt-backtest-window', CHART_CSS + `
  :host { border: solid #728e9b; border-width: 2px 0; }
  rt-titlebar { height: 23px; }
  .bar { height: 45px; }
  .picks { flex: 1; display: flex; align-items: center; justify-content: space-between; padding: 0 211px; box-shadow: inset 0 1px #c4dde7; }
  .picks rt-select { width: 86px; }
  .ver { display: flex; align-items: center; gap: 10px; padding: 0 3px 0 11px; background: #fff; border-left: 1px solid #718e9c; }
  .ver span { white-space: nowrap; } .ver .raised { width: 69px; height: 39px; }
  .curve { background: linear-gradient(#fff, #f4f7ff); } .pos { background: #f3f6ff; } .prix { background: linear-gradient(#f1f5ff, #dce4fd); }
  .gap { height: 2px; background: #fff; } .gap.wide { height: 3px; }
`, `<rt-titlebar><div class="symbol" style="margin-left:0">${SYMBOL}</div></rt-titlebar>
<div class="bar"><div class="picks"><rt-select active label="Période" value="100 unités"></rt-select><rt-select label="Unité de temps" value="15 minutes"></rt-select></div><div class="ver"><span><b>Breakout ProOrder actif</b><br>Version : <a href="#">30 juil. 2015 11:01:09</a></span><button class="raised" aria-label="Rapport"><rt-icon name="report"></rt-icon></button></div></div>
<div class="row"><div class="plot curve"><div class="tag">Courbe gains &amp; pertes : Breakout ProOrder actif - 15 minutes<rt-icon name="detach"></rt-icon><rt-icon name="closeround"></rt-icon></div><svg height="132" fill="none">${curve()}</svg></div>${
  yAxis(132, [[20, '750'], [39, '700'], [58, '650'], [77, '600'], [96, '550'], [115, '500', 1]], [2],
  '<path d="M0 8.500h5" stroke="#d33"/><rect x="4.500" y=".500" width="36" height="15" fill="#e6edf5" stroke="#7b8f9a"/><text x="6" y="12" style="fill:#d2333c">784,60</text>')}</div>
<div class="gap"></div>
<div class="row"><div class="plot pos"><div class="tag">ProOrder - Positions : Breakout ProOrder actif - 15 minutes<rt-icon name="detach"></rt-icon><rt-icon name="closeround"></rt-icon></div><svg height="30" shape-rendering="crispEdges">${positions()}</svg></div>${
  yAxis(30, [], [], '<path d="M0 14.500h5" stroke="#4b4"/><rect x="4.500" y="6.500" width="9" height="15" fill="#e6edf5" stroke="#7b8f9a"/><text x="6" y="18" style="fill:#4cba4c">0</text>')}</div>
<div class="gap wide"></div>
<div class="row"><div class="plot prix"><div class="tag">Prix<rt-icon name="wrench"></rt-icon><rt-icon name="detach"></rt-icon></div><svg height="277"><g shape-rendering="crispEdges">${candles(ALL, X2, PY)}</g>${
  CROSS(206, 163, '#27a32f', '#0f7a18')}${CROSS(621, 87, '#e83338', '#b8141c')}${CROSS(1037, 265, '#27a32f', '#0f7a18')}<path d="M424 113l5 6h-3v7h-4v-7h-3z" fill="#1fa52b" stroke="#0f7a18"/><path d="M829 103l5-6h-3v-7h-4v7h-3z" fill="#e83338" stroke="#b8141c"/>${
  FLAG(592, -3, '2@4 629,1', '#f6bcc4', '#e28b95', 19)}${FLAG(799, -3, '2@4 610,6', '#f6bcc4', '#e28b95', 19)}${FLAG(177, 260, '2@4 602,2', '#b8e8bd', '#4da35a', 22)}${FLAG(394, 260, '2@4 643,5', '#b8e8bd', '#4da35a', 22)}${FLAG(1007, 260, '2@4 526,', '#b8e8bd', '#4da35a', 22)}${COPY(274)}</svg></div>${
  yAxis(277, [4700, 4680, 4660, 4640, 4620, 4600, 4580, 4560, 4540, 4520].map(p => [PY(p), '4 ' + (p - 4000), p % 100 === 0]), [4690, 4670, 4650, 4630, 4610, 4590, 4570, 4550, 4530, 4510].map(PY), priceTag(239))}</div>
${xAxis([[56, '13:00'], [108, '16:00'], [160, '19:00'], [212, '22:00'], [246, '10', 1], [315, '04:00'], [367, '07:00'], [419, '10:00'], [471, '13:00'], [523, '16:00'], [575, '19:00'], [627, '22:00'], [661, '11', 1], [731, '04:00'], [782, '07:00'], [834, '10:00'], [886, '13:00'], [938, '16:00'], [990, '19:00']])}
<rt-hscroll parts="333 608"><button aria-label="Exporter"><rt-icon name="export"></rt-icon></button></rt-hscroll>`);
</script>
</body>
</html>
